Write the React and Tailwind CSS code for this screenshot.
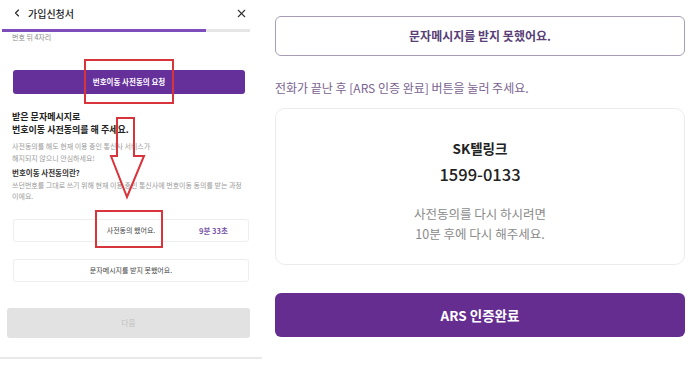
import React from "react";
import { ChevronLeft, X } from "lucide-react";

const font = "font-['Noto_Sans_CJK_KR','Noto_Sans',sans-serif]";

function PhoneScreen() {
  return (
    <div className={`relative w-[262px] h-[368px] shrink-0 bg-white ${font}`}>
      {/* Header */}
      <div className="flex items-center h-[26px] pl-[11px] pr-[14px]">
        <ChevronLeft size={12} strokeWidth={2.2} color="#222" />
        <span className="ml-[5px] text-[10px] font-medium text-[#222]">가입신청서</span>
        <X size={13} strokeWidth={2} color="#333" className="ml-auto" />
      </div>

      {/* Progress */}
      <div className="mt-[3px] ml-[2px] w-[248px] h-[3px] bg-[#e6e6e6]">
        <div className="h-[3px] w-[204px] bg-[#7c4dbb]" />
      </div>
      <p className="mt-[1px] pl-[12px] text-[7px] leading-[9px] text-[#888]">번호 뒤 4자리</p>

      {/* Request button */}
      <button className="mt-[28px] mx-[13px] w-[232px] h-[24px] rounded-[3px] bg-[#65309a] text-white text-[7.5px] font-bold">
        번호이동 사전동의 요청
      </button>

      {/* Guide */}
      <div className="pl-[12px] pr-[10px]">
        <h3 className="mt-[16px] text-[9px] leading-[13px] font-bold text-[#222]">
          받은 문자메시지로
          <br />
          번호이동 사전동의를 해 주세요.
        </h3>
        <p className="mt-[4px] text-[7px] leading-[12px] text-[#9a9a9a]">
          사전동의를 해도 현재 이용 중인 통신사 서비스가
          <br />
          해지되지 않으니 안심하세요!
        </p>
        <p className="mt-[3px] text-[7.5px] leading-[12px] font-bold text-[#333]">번호이동 사전동의란?</p>
        <p className="mt-[1px] text-[7px] leading-[11px] text-[#9a9a9a] whitespace-nowrap">
          쓰던번호를 그대로 쓰기 위해 현재 이용 중인 통신사에 번호이동 동의를 받는 과정
          <br />
          이에요.
        </p>
      </div>

      {/* Options */}
      <div className="mt-[17px] mx-[13px] h-[23px] rounded-[3px] border border-[#eeeeee] flex items-center relative">
        <span className="w-full text-center text-[7px] text-[#444]">사전동의 했어요.</span>
        <span className="absolute left-[185px] text-[7.5px] font-bold text-[#7b55a8]">9분 33초</span>
      </div>
      <div className="mt-[17px] mx-[13px] h-[23px] rounded-[3px] border border-[#eeeeee] flex items-center justify-center">
        <span className="text-[7px] text-[#444]">문자메시지를 받지 못했어요.</span>
      </div>

      {/* Next */}
      <button className="mt-[26px] mx-[7px] w-[243px] h-[30px] rounded-[3px] bg-[#e2e2e2] text-[7.5px] text-[#bdbdbd]">
        다음
      </button>
      <div className="mt-[19px] h-[2px] bg-[#e9e9e9]" />

      {/* Annotations */}
      <div className="absolute left-[84px] top-[59px] w-[90px] h-[45px] border-2 border-[#d8343c]" />
      <div className="absolute left-[95px] top-[210px] w-[68px] h-[38px] border-2 border-[#d8343c]" />
      <svg className="absolute left-[108px] top-[116px]" width="40" height="84" viewBox="0 0 40 84">
        <path
          d="M9 2 H26 V40 H36 L19 81 L3 40 H9 Z"
          fill="none"
          stroke="#d8343c"
          strokeWidth="2"
          strokeLinejoin="miter"
        />
      </svg>
    </div>
  );
}

function ZoomedPanel() {
  return (
    <div className={`flex-1 pl-[13px] pr-[15px] bg-white ${font}`}>
      <button className="mt-[16px] w-full h-[40px] rounded-[6px] border border-[#a99db6] text-[12px] font-bold text-[#5a3f78]">
        문자메시지를 받지 못했어요.
      </button>
      <p className="mt-[23px] text-[12px] leading-[18px] text-[#7a6290]">
        전화가 끝난 후 [ARS 인증 완료] 버튼을 눌러 주세요.
      </p>
      <div className="mt-[11px] h-[157px] rounded-[10px] border border-[#ececec] flex flex-col items-center pt-[29px]">
        <p className="text-[13.5px] leading-[20px] font-bold text-[#222]">SK텔링크</p>
        <p className="mt-[4px] text-[16.5px] leading-[24px] font-medium text-[#222]">1599-0133</p>
        <p className="mt-[18px] text-[12.5px] leading-[20px] text-[#8a8a8a] text-center">
          사전동의를 다시 하시려면
          <br />
          10분 후에 다시 해주세요.
        </p>
      </div>
      <button className="mt-[28px] w-full h-[44px] rounded-[6px] bg-[#662d91] text-white text-[13.5px] font-bold">
        ARS 인증완료
      </button>
    </div>
  );
}

export default function App() {
  return (
    <div className="flex w-[700px] h-[368px] bg-white overflow-hidden">
      <PhoneScreen />
      <ZoomedPanel />
    </div>
  );
}
